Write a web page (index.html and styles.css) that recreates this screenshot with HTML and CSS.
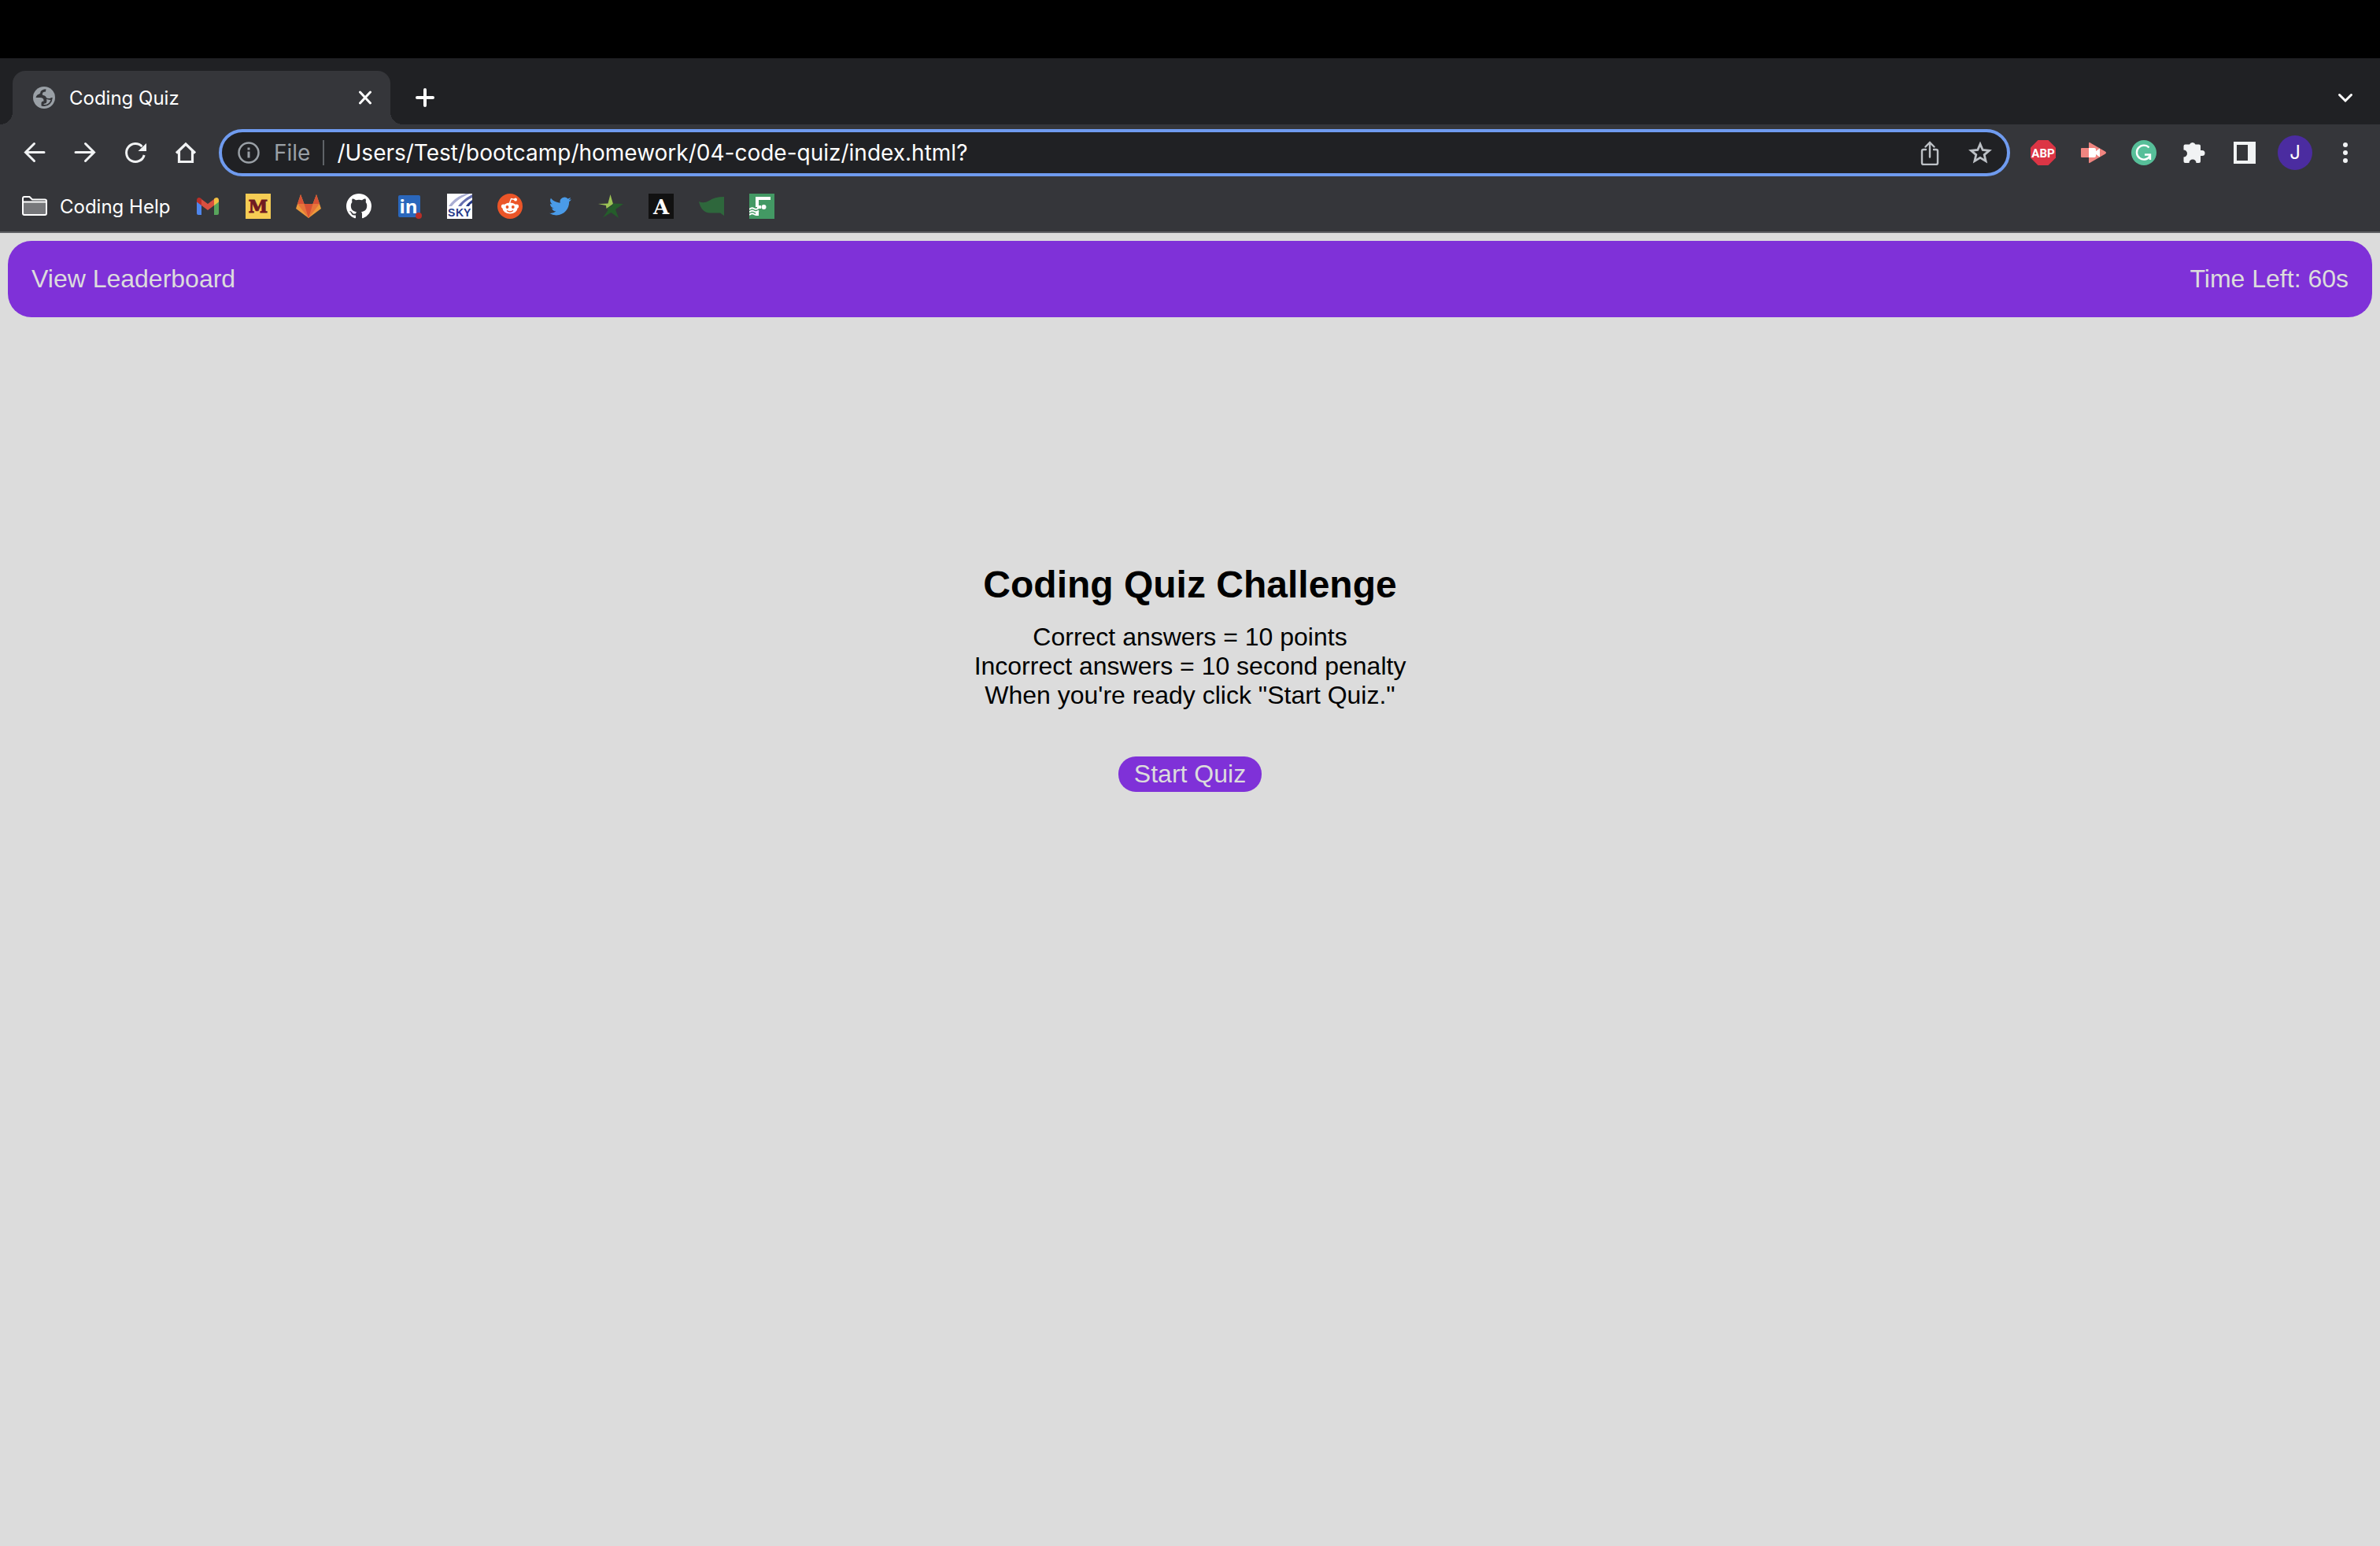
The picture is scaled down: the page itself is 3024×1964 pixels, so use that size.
FILE: index.html
```html
<!DOCTYPE html>
<html lang="en">
<head>
<meta charset="utf-8">
<title>Coding Quiz</title>
<link rel="stylesheet" href="styles.css">
</head>
<body>
<div class="browser">
  <div class="tab-strip">
    <div class="tab">
      <svg class="tab-icon" viewBox="0 0 28 28"><circle cx="14" cy="14" r="14" fill="#9aa0a6"/><path d="M16.500 3.200Q11 3.500 9.500 6.500Q9.800 8.500 7.800 9.500Q4.500 10 3.500 14H9Q13.500 14 13.500 17.500V18.500Q10.500 18.500 10.500 21V24.500Q17 26.500 21.500 22Q24.500 19 24.800 14Q23 13.500 21.500 15Q17.500 15.500 16.500 13.500Q16 11.500 12.500 11Q11 9.500 12.500 7.500Q14 6.500 16 6.500Z" fill="#35363a"/><path d="M17 16Q21 17 22.500 17Q20 23.500 13.500 23Q13 21.500 15 21.500Q17.500 21 17.500 18.500Z" fill="#9aa0a6"/></svg>
      <span class="tab-title">Coding Quiz</span>
      <button class="tab-close" aria-label="Close tab"><svg viewBox="0 0 16 18"><path d="M1.500 2L14.500 16M14.500 2L1.500 16" stroke="#fff" stroke-width="3" stroke-linecap="round"/></svg></button>
    </div>
    <button class="new-tab" aria-label="New tab"><svg class="i24" viewBox="0 0 24 24"><path d="M12 2V22M2 12H22" stroke="#fff" stroke-width="4" stroke-linecap="round"/></svg></button>
    <button class="tool tab-search" aria-label="Search tabs"><svg class="i24" viewBox="0 0 24 24"><path d="M4.500 8.500L12 16L19.500 8.500" fill="none" stroke="#fff" stroke-width="3" stroke-linecap="round"/></svg></button>
  </div>

  <div class="toolbar">
    <button class="tool" aria-label="Back"><svg class="i32" viewBox="0 0 32 32"><path d="M28 15.500H4.500M15.500 4.500L4.500 15.500L15.500 26.500" fill="none" stroke="#f1f3f4" stroke-width="3" stroke-linecap="round"/></svg></button>
    <button class="tool" aria-label="Forward"><svg class="i32" viewBox="0 0 32 32"><path d="M4 15.500H27.500M16.500 4.500L27.500 15.500L16.500 26.500" fill="none" stroke="#f1f3f4" stroke-width="3" stroke-linecap="round"/></svg></button>
    <button class="tool" aria-label="Reload"><svg class="i32" viewBox="0 0 32 32"><path d="M27.200 19A11.500 11.500 0 1 1 24.500 8.200" fill="none" stroke="#f1f3f4" stroke-width="3"/><path d="M30 4V14H19.500Z" fill="#f1f3f4"/></svg></button>
    <button class="tool" aria-label="Home"><svg class="i32" viewBox="0 0 32 32"><path d="M4 16.500L16 5L28 16.500M7.500 14V27.500H24.500V14" fill="none" stroke="#f1f3f4" stroke-width="3.200"/></svg></button>
    <form class="omnibox">
      <svg class="i32" viewBox="0 0 32 32"><circle cx="16" cy="16" r="12.500" fill="none" stroke="#9aa0a6" stroke-width="2.500"/><path d="M16 14.500V22.500M16 9.500V12.500" stroke="#9aa0a6" stroke-width="3"/></svg>
      <label class="scheme" for="address">File</label>
      <input class="address" id="address" type="text" value="/Users/Test/bootcamp/homework/04-code-quiz/index.html?">
      <button class="tool" type="button" aria-label="Share"><svg class="i32" viewBox="0 0 32 32"><path d="M16 21.500V3.500M10.500 8.500L16 3L21.500 8.500M11 12H8Q6 12 6 14V29Q6 31 8 31H24Q26 31 26 29V14Q26 12 24 12H21" fill="none" stroke="#bdc1c6" stroke-width="2.400" stroke-linecap="round"/></svg></button>
      <button class="tool" type="button" aria-label="Bookmark this page"><svg class="i32" viewBox="0 0 32 32"><path d="M16 5L19.200 12.500L27.500 13.300L21.200 18.600L23.100 26.600L16 22.400L8.900 26.600L10.800 18.600L4.500 13.300L12.800 12.500Z" fill="none" stroke="#bdc1c6" stroke-width="2.800"/></svg></button>
    </form>
    <button class="tool" aria-label="Adblock Plus"><svg class="i32" viewBox="0 0 32 32"><path d="M9.500 0H22.500L32 9.500V22.500L22.500 32H9.500L0 22.500V9.500Z" fill="#dc3545"/><text class="abp" x="16" y="22" text-anchor="middle">ABP</text></svg></button>
    <button class="tool" aria-label="Screen recorder"><svg class="i32" viewBox="0 0 32 32"><path d="M0 11Q0 10 1 10H10V4Q10.500 2 12 3.500L31 14.500Q33 16 31 17.500L12 28.500Q10 30 10 28V22H1Q0 22 0 21Z" fill="#f08580"/><path d="M10 10H17Q19 10 19 12V14L24 10.500V21.500L19 18V20Q19 22 17 22H10Z" fill="#fff"/></svg></button>
    <button class="tool" aria-label="Grammarly"><svg class="i32" viewBox="0 0 32 32"><circle cx="16" cy="16" r="16" fill="#57bf99"/><path d="M22.500 9.500A9 9 0 1 0 23.500 20.500M17 18.500H24V25" fill="none" stroke="#fff" stroke-width="2.400"/></svg></button>
    <button class="tool" aria-label="Extensions"><svg class="i32" viewBox="2 1 32 32"><path d="M12 6.500A4 4 0 0 1 19.500 6.500H24Q26 6.500 26 8.500V14H28A3.500 3.500 0 0 1 28 21H26V28Q26 30 24 30H20.500A4.500 4.500 0 0 0 11.500 30H6.500Q4.500 30 4.500 28V22.500A4.500 4.500 0 0 0 4.500 13.500V8.500Q4.500 6.500 6.500 6.500H12Z" fill="#f1f3f4"/></svg></button>
    <button class="tool" aria-label="Side panel"><svg class="i32" viewBox="0 0 32 32"><path fill-rule="evenodd" d="M2 2H30V30H2ZM6 6V26H20V6Z" fill="#f1f3f4"/></svg></button>
    <button class="tool" aria-label="Profile"><span class="avatar">J</span></button>
    <button class="tool" aria-label="Menu"><svg class="i32" viewBox="0 0 32 32"><g fill="#f1f3f4"><circle cx="16" cy="6" r="3"/><circle cx="16" cy="16" r="3"/><circle cx="16" cy="26" r="3"/></g></svg></button>
  </div>

  <nav class="bookmarks" aria-label="Bookmarks">
    <a class="folder" href="#"><svg class="i32" viewBox="0 0 32 32"><path d="M1 11H31V25Q31 27 29 27H3Q1 27 1 25Z" fill="#77787b"/><path d="M1 10.500H31M1 6Q1 4 3 4H9.500L13 7.500H29Q31 7.500 31 9.500V25Q31 27 29 27H3Q1 27 1 25Z" fill="none" stroke="#fff" stroke-width="2"/></svg>Coding Help</a>
    <a class="mark" href="#" aria-label="Gmail"><svg class="i32" viewBox="0 0 32 32"><path d="M2 8V25Q2 27 4 27H8V14Z" fill="#4f86ec"/><path d="M24 14V27H28Q30 27 30 25V8Z" fill="#58a55c"/><path d="M24 7L16 13L8 7V15L16 21L24 15Z" fill="#d95040"/><path d="M2 10V8.500Q2 5 5 5Q6.500 5 8 6.500V15L2 10.500Z" fill="#b92f28"/><path d="M30 10V8.500Q30 5 27 5Q25.500 5 24 6.500V15L30 10.500Z" fill="#f2c043"/></svg></a>
    <a class="mark" href="#" aria-label="University of Minnesota"><svg class="i32" viewBox="0 0 32 32"><path d="M0 0H32V32H0Z" fill="#f6cd54"/><text class="minn" x="16" y="24" text-anchor="middle">M</text></svg></a>
    <a class="mark" href="#" aria-label="GitLab"><svg class="i32" viewBox="0 0 32 32"><path d="M6 1L10.500 13H21.500L26 1L32 19L16 31L0 19Z" fill="#ec9a3c"/><path d="M2 13H30L16 31Z" fill="#e7743a"/><path d="M6 1L10.500 13H2ZM26 1L30 13H21.500ZM10.500 13H21.500L16 31Z" fill="#d65135"/></svg></a>
    <a class="mark" href="#" aria-label="GitHub"><svg class="i32" viewBox="0 0 16 16"><path fill="#fff" d="M8 0C3.580 0 0 3.580 0 8c0 3.540 2.290 6.530 5.470 7.590.4.070.55-.17.55-.38 0-.19-.01-.82-.01-1.490-2.010.37-2.530-.49-2.690-.94-.09-.23-.48-.94-.82-1.130-.28-.15-.68-.52-.01-.53.63-.01 1.080.58 1.230.82.72 1.210 1.870.87 2.330.66.07-.52.28-.87.51-1.070-1.780-.2-3.640-.89-3.640-3.950 0-.87.31-1.590.82-2.150-.08-.2-.36-1.020.08-2.120 0 0 .67-.21 2.200.82.64-.18 1.320-.27 2-.27s1.360.09 2 .27c1.530-1.040 2.200-.82 2.200-.82.44 1.100.16 1.920.08 2.120.51.56.82 1.270.82 2.150 0 3.070-1.870 3.750-3.650 3.950.29.25.54.73.54 1.480 0 1.070-.01 1.930-.01 2.200 0 .21.15.46.55.38A8.010 8.010 0 0 0 16 8c0-4.420-3.580-8-8-8z"/></svg></a>
    <a class="mark" href="#" aria-label="LinkedIn"><svg class="i32" viewBox="0 0 32 32"><rect x="2" y="2" width="28" height="28" rx="2" fill="#2a67bc"/><text class="linked" x="15" y="25" text-anchor="middle">in</text><circle cx="28" cy="28" r="4" fill="#b92f28"/></svg></a>
    <a class="mark" href="#" aria-label="Sky"><svg class="i32" viewBox="0 0 32 32"><path d="M0 0H32V32H0Z" fill="#fff"/><path d="M2 16Q10 4 24 0H29Q14 6 6 16Z" fill="#a9add3"/><path d="M14 16Q20 7 32 1V5Q23 9 18 16Z" fill="#666fb0"/><path d="M24 16Q26 12 32 8V12Q29 13 28 16Z" fill="#273a89"/><text class="sky" x="1" y="29">S</text><text class="sky" x="11" y="29">K</text><text class="sky" x="21" y="29">Y</text></svg></a>
    <a class="mark" href="#" aria-label="Reddit"><svg class="i32" viewBox="0 0 32 32"><circle cx="16" cy="16" r="16" fill="#eb5528"/><path d="M15.500 12L17.500 6.500L22.500 7.500" fill="none" stroke="#fff" stroke-width="1.400"/><g fill="#fff"><circle cx="23" cy="7.500" r="2"/><circle cx="7.500" cy="16" r="2.600"/><circle cx="24.500" cy="16" r="2.600"/><ellipse cx="16" cy="18.500" rx="9.500" ry="7"/></g><circle cx="12.500" cy="17" r="1.900" fill="#eb5528"/><circle cx="19.800" cy="17" r="1.900" fill="#eb5528"/><path d="M12 21.500Q16 24.500 20 21.500" fill="none" stroke="#eb5528" stroke-width="1.300"/></svg></a>
    <a class="mark" href="#" aria-label="Twitter"><svg class="i28" viewBox="0 0 24 24"><path fill="#4a9be8" d="M23.950 4.570a10 10 0 0 1-2.820.77 4.960 4.960 0 0 0 2.160-2.720c-.95.550-2 .950-3.130 1.180a4.920 4.920 0 0 0-8.380 4.480C7.690 8.090 4.070 6.130 1.640 3.160a4.820 4.820 0 0 0-.67 2.480c0 1.710.870 3.210 2.190 4.100a4.900 4.900 0 0 1-2.230-.62v.06a4.920 4.920 0 0 0 3.950 4.830 5 5 0 0 1-2.210.08 4.940 4.940 0 0 0 4.600 3.420A9.870 9.870 0 0 1 0 19.540a13.990 13.990 0 0 0 7.550 2.210c9.050 0 14-7.500 14-13.980 0-.21 0-.42-.02-.63a9.940 9.940 0 0 0 2.460-2.550z"/></svg></a>
    <a class="mark" href="#" aria-label="Star"><svg class="i32" viewBox="0 0 32 32"><path d="M15.500 1L19 13L10.500 19L10 15L0 13L12.500 12.500Z" fill="#9dc456"/><path d="M19 12.500L32 13L22 20L26 31L16.500 24L6 30.500L12.500 21L10.500 19L17 16Z" fill="#255d2b"/></svg></a>
    <a class="mark" href="#" aria-label="A"><svg class="i32" viewBox="0 0 32 32"><path d="M0 0H32V32H0Z" fill="#111"/><text class="slab" x="16" y="26" text-anchor="middle">A</text></svg></a>
    <a class="mark" href="#" aria-label="Leaf"><svg class="i32" viewBox="0 0 32 32"><path d="M0 10Q6 13 13 9Q20 4 32 4V28L27 24.500H14Q3 24 0 10Z" fill="#2e673c"/></svg></a>
    <a class="mark" href="#" aria-label="F"><svg class="i32" viewBox="0 0 32 32"><path d="M0 0H32V32H0Z" fill="#439964"/><path d="M8 6H27M10 4V17M10 23V28M10 17H15" stroke="#fff" stroke-width="4"/><circle cx="18.500" cy="17" r="3" fill="#fff"/><path d="M0 20Q3 17 6 19T12 18M0 23.500Q3 20.500 6 22.500T12 21.500M0 27Q3 24 6 26T10 25" fill="none" stroke="#fff" stroke-width="1.800"/></svg></a>
  </nav>
</div>

<div class="page">
  <header class="quiz-bar">
    <a class="leaderboard" href="#">View Leaderboard</a>
    <span>Time Left: 60s</span>
  </header>
  <main class="intro">
    <h1 class="title">Coding Quiz Challenge</h1>
    <p class="rules">Correct answers = 10 points<br>Incorrect answers = 10 second penalty<br>When you're ready click "Start Quiz."</p>
    <button class="start">Start Quiz</button>
  </main>
</div>
</body>
</html>
```

FILE: styles.css
```css
* { box-sizing: border-box; }

body {
  margin: 0;
  min-height: 100vh;
  background: #dcdcdc;
  font-family: "Liberation Sans", Arial, sans-serif;
}

button {
  border: 0;
  padding: 0;
  background: none;
  color: inherit;
  font: inherit;
}

a { color: inherit; text-decoration: none; }

svg { display: block; flex: none; }
.i24 { width: 24px; height: 24px; }
.i28 { width: 28px; height: 28px; }
.i32 { width: 32px; height: 32px; }

/* browser window */
.browser {
  border-top: 74px solid #000;
  border-bottom: 2px solid #5f6064;
  background: #35363a;
  color: #fff;
  font-family: Inter, "Open Sans", sans-serif;
  font-size: 24px;
}

.tab-strip {
  display: flex;
  align-items: flex-end;
  height: 84px;
  padding: 0 12px 0 16px;
  background: #202124;
}

.tab {
  position: relative;
  display: flex;
  align-items: center;
  width: 480px;
  height: 68px;
  padding: 0 24px 0 26px;
  border-radius: 16px 16px 0 0;
  background: #35363a;
}

.tab::before,
.tab::after {
  content: "";
  position: absolute;
  bottom: 0;
  width: 16px;
  height: 16px;
}
.tab::before {
  right: 100%;
  background: radial-gradient(circle at 0 0, #202124 16px, #35363a 16px);
}
.tab::after {
  left: 100%;
  background: radial-gradient(circle at 100% 0, #202124 16px, #35363a 16px);
}

.tab-icon { width: 28px; height: 28px; }
.tab-title { flex: 1; margin-left: 18px; }
.tab-close svg { width: 16px; height: 18px; }

.new-tab {
  display: grid;
  place-items: center;
  width: 56px;
  height: 68px;
  margin-left: 16px;
}

.tab-search { height: 68px; margin-left: auto; }

.toolbar {
  display: flex;
  align-items: center;
  height: 72px;
  padding: 0 12px;
}

.tool {
  display: grid;
  place-items: center;
  flex: none;
  width: 64px;
}

.omnibox {
  display: flex;
  align-items: center;
  flex: 1;
  height: 60px;
  margin: 0 10px;
  padding: 0 2px 0 18px;
  border: 4px solid #6f9bef;
  border-radius: 30px;
  background: #202124;
  font-size: 28px;
}

.scheme {
  margin-left: 16px;
  padding-right: 16px;
  border-right: 2px solid #5f6368;
  line-height: 32px;
  color: #9aa0a6;
}

.address {
  flex: 1;
  min-width: 0;
  margin: 0 0 0 16px;
  padding: 0;
  border: 0;
  outline: 0;
  background: none;
  color: #fff;
  font: inherit;
}

.avatar {
  width: 44px;
  height: 44px;
  border-radius: 50%;
  background: #4b2ca0;
  line-height: 44px;
  text-align: center;
}

.bookmarks {
  display: flex;
  align-items: center;
  height: 64px;
  padding-left: 28px;
}

.folder {
  display: flex;
  align-items: center;
  gap: 16px;
  width: 204px;
  white-space: nowrap;
}

.mark {
  display: grid;
  place-items: center;
  width: 64px;
}

.abp { font: bold 15px Roboto, sans-serif; fill: #fff; }
.minn { font: bold 22px "DejaVu Serif", serif; fill: #701a21; stroke: #701a21; stroke-width: 1px; }
.linked { font: bold 24px "Open Sans", sans-serif; fill: #fff; }
.sky { font: bold 14px "Liberation Sans", sans-serif; fill: #273a89; }
.slab { font: bold 26px "DejaVu Serif", serif; fill: #fff; }

/* quiz page */
.page {
  padding: 10px;
  font-size: 32px;
  line-height: 37px;
}

.quiz-bar {
  display: flex;
  justify-content: space-between;
  padding: 30px;
  border-radius: 30px;
  background: #7f31d8;
  color: #dcdcdc;
}

.intro {
  display: flex;
  flex-direction: column;
  align-items: center;
  padding-top: 312px;
  text-align: center;
}

.title {
  margin: 0 0 20px;
  font-size: 48px;
  line-height: 56px;
}

.rules { margin: 0 0 59px; }

.start {
  padding: 4px 20px;
  border-radius: 22px;
  background: #7f31d8;
  color: #dcdcdc;
}
```
